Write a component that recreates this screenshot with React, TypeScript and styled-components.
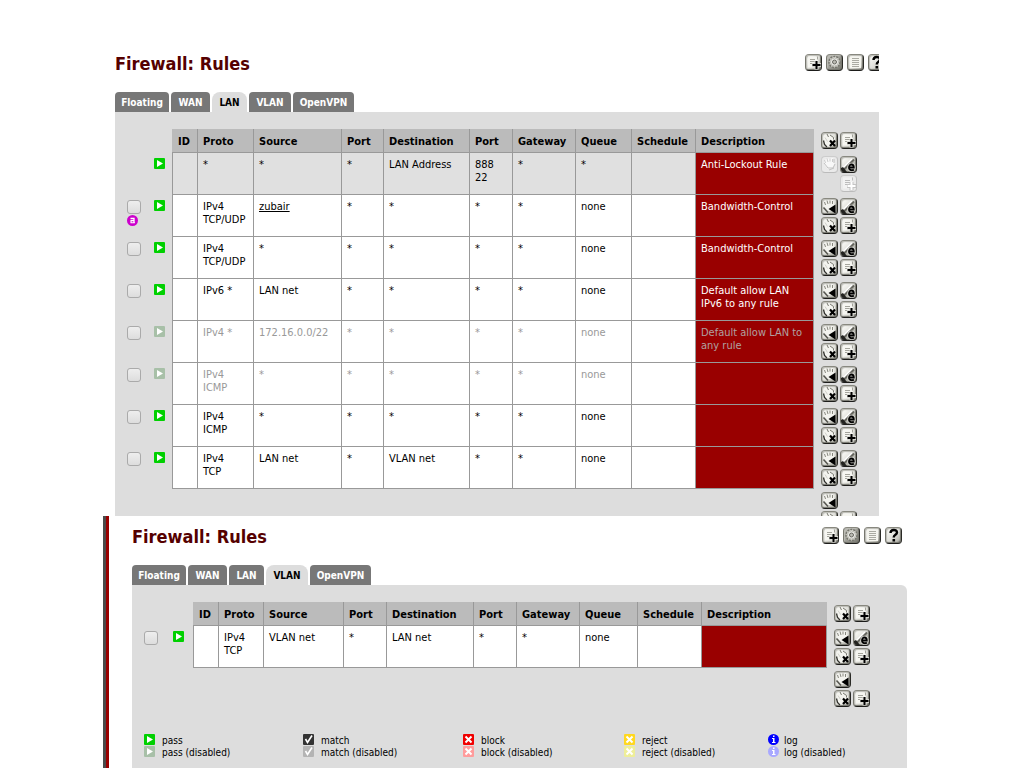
import React from "react";
import styled, { createGlobalStyle, css } from "styled-components";

const GlobalStyle = createGlobalStyle`
  * { box-sizing: border-box; }
  body {
    margin: 0;
    background: #fff;
    color: #000;
    font-family: "DejaVu Sans Condensed", "DejaVu Sans", sans-serif;
    font-size: 11px;
    line-height: 13px;
  }
`;

const Page = styled.div`
  display: flex;
  flex-direction: column;
  min-height: 100vh;
`;

const UpperSection = styled.section`
  margin: 0 145px 0 115px;
  padding-top: 53px;
  overflow: hidden;
`;

const LowerSection = styled.section`
  flex: 1;
  display: flex;
  flex-direction: column;
  margin: 0 117px 0 103px;
  padding: 10px 0 0 29px;
  background: linear-gradient(to right, #4a4a4a 3px, #990000 3px, #990000 6px, #fff 6px);
`;

const Head = styled.header`
  display: flex;
  justify-content: space-between;
  align-items: flex-start;
  height: 22px;
  margin-bottom: 17px;
`;

const Title = styled.h1`
  margin: 0;
  color: #550000;
  font-size: 18px;
  line-height: 22px;
  font-weight: 700;
  white-space: nowrap;
`;

const Tools = styled.div<{ $bleed?: boolean }>`
  display: flex;
  gap: 4px;
  padding-top: 1px;
  margin-right: ${(p) => (p.$bleed ? "-6px" : "5px")};
`;

const Tabs = styled.nav`
  display: flex;
  gap: 2px;
`;

const Tab = styled.a<{ $width: number; $active?: boolean }>`
  width: ${(p) => p.$width}px;
  height: 20px;
  line-height: 21px;
  text-align: center;
  text-decoration: none;
  font-size: 10px;
  font-weight: 700;
  color: ${(p) => (p.$active ? "#000" : "#fff")};
  background: ${(p) => (p.$active ? "#ddd" : "#777")};
  border-radius: ${(p) => (p.$active ? "8px 8px 0 0" : "4px 4px 0 0")};
`;

const Panel = styled.div<{ $rounded?: boolean }>`
  flex: 1;
  padding-top: 17px;
  background: #ddd;
  border-radius: ${(p) => (p.$rounded ? "0 6px 0 0" : "0")};
`;

const Table = styled.table`
  width: 100%;
  table-layout: fixed;
  border-collapse: separate;
  border-spacing: 0;
`;

const Col = styled.col<{ $width?: number }>`
  width: ${(p) => (p.$width ? `${p.$width}px` : "auto")};
`;

const HeadCell = styled.th<{ $first?: boolean; $last?: boolean }>`
  height: 24px;
  padding: 2px 0 0 ${(p) => (p.$first ? "6px" : "5px")};
  text-align: left;
  white-space: nowrap;
  background: #bbb;
  border-right: 1px solid ${(p) => (p.$last ? "#bbb" : "#999")};
  border-bottom: 1px solid #999;
`;

const Row = styled.tr<{ $disabled?: boolean }>`
  color: ${(p) => (p.$disabled ? "#999" : "#000")};
`;

const Cell = styled.td<{ $first?: boolean; $shaded?: boolean }>`
  height: 42px;
  padding: 5px 0 0 5px;
  vertical-align: top;
  white-space: pre-line;
  background: ${(p) => (p.$shaded ? "#e0e0e0" : "#fff")};
  border-right: 1px solid #999;
  border-bottom: 1px solid #999;
  ${(p) => p.$first && css`border-left: 1px solid #999;`}
`;

const DescCell = styled(Cell)<{ $disabled?: boolean }>`
  color: ${(p) => (p.$disabled ? "#b0a0a0" : "#fff")};
  background: #990000;
`;

const PlainCell = styled.td<{ $pad?: number }>`
  padding: 5px 0 0 ${(p) => p.$pad ?? 0}px;
  vertical-align: top;
`;

const ActionCell = styled.td`
  padding: 3px 0 0 7px;
  vertical-align: top;
`;

const ActionGrid = styled.div<{ $clipped?: boolean }>`
  display: grid;
  grid-template-columns: 17px 17px;
  grid-auto-rows: 17px;
  gap: 2px;
  ${(p) => p.$clipped && css`height: 24px; overflow: hidden;`}
`;

const Check = styled.input`
  display: block;
  appearance: none;
  width: 14px;
  height: 14px;
  margin: 0 0 1px;
  border: 1px solid #aaa;
  border-radius: 3px;
  background: linear-gradient(#eee, #ddd);
`;

const SourceLink = styled.a`
  color: #000;
  text-decoration: underline;
`;

const IconButton = styled.button<{ $faded?: boolean; $column?: number; $dark?: boolean }>`
  display: block;
  width: 17px;
  height: 17px;
  padding: 0;
  overflow: hidden;
  border: 1px solid;
  border-color: #88887f #2a2a26 #1c1c1a #77776f;
  border-radius: 4px;
  box-shadow: inset -1px -1px 1px #77776f, inset 1px 1px 1px #bbbbb4;
  background: ${(p) =>
    p.$dark
      ? "linear-gradient(135deg, #c4c4be, #77776f)"
      : "linear-gradient(135deg, #f4f4f0 20%, #deded8 55%, #a4a49c 100%)"};
  ${(p) => p.$faded && css`
    border-color: #ccc #c0c0c0 #bbb #ccc;
    box-shadow: none;
    background: #eaeaea;
  `}
  ${(p) => p.$column && css`grid-column: ${p.$column};`}
`;

const Glyph = styled.svg`
  display: block;
`;

const Legend = styled.div`
  display: grid;
  grid-template-columns: 159px 160px 161px 144px 1fr;
  padding: 27px 0 10px 12px;
  font-size: 10px;
`;

const LegendList = styled.ul`
  margin: 0;
  padding: 0;
  list-style: none;
`;

const LegendItem = styled.li<{ $gap: number }>`
  display: flex;
  gap: ${(p) => p.$gap}px;
  height: 12px;
  line-height: 14px;
  white-space: nowrap;
`;

type ActionKind = "add" | "delete" | "edit" | "move" | "gear" | "list" | "help";

function ActionGlyph({ kind, faded }: { kind: ActionKind; faded?: boolean }) {
  const ink = faded ? "#fff" : "#000";
  const line = faded ? "#bbb" : "#a4a49c";
  switch (kind) {
    case "add":
      return (
        <>
          <path d="M2 1.500h8l2 2v9H2z" fill={faded ? "#f2f2f2" : "#f6f6f1"} />
          <path d="M4 4.500h5M4 6.500h5M4 8.500h3" stroke={line} fill="none" />
          <path d="M11.500 1.500v3" stroke={line} />
          <path d="M6 10h9M10.500 6v8.500" stroke={faded ? "#c4c4c4" : "#d8d8d2"} strokeWidth="4" />
          <path d="M6.500 10h8M10.500 6v8" stroke={ink} strokeWidth="2" />
        </>
      );
    case "delete":
      return (
        <>
          <path d="M2 3l4-2 7 4v7l-8 2-3-5z" fill="#f4f4ef" />
          <path d="M1.500 7.500l1 4 2.500 2.500" stroke="#33332f" strokeWidth="1.300" fill="none" />
          <path d="M5 1l1.500 3M8 2l3.500 2.500v2" stroke="#77776f" fill="none" />
          <path d="M3 4.500l2.500 4" stroke="#d0d0ca" />
          <path d="M8 7.500l5 5.500M13 7.500l-5 5.500" stroke="#000" strokeWidth="2.200" />
        </>
      );
    case "edit":
      return (
        <>
          <path d="M13.500 1.500L14 14H2z" fill="#b4b4ac" />
          <path d="M2 11L11 2" stroke="#fff" strokeWidth="1.500" />
          <path d="M2 13.500L13 2.500" stroke="#66665f" strokeWidth="2" />
          <path d="M0 15v-4l2-1 4 5z" fill="#22221f" />
          <path d="M8 10.500h4.800c0-4-4.800-4-4.800 0 0 3.200 3.600 3.200 4.800 2" stroke="#d4d4ce" strokeWidth="3.500" fill="none" />
          <path d="M8 10.500h4.800c0-4-4.800-4-4.800 0 0 3.200 3.600 3.200 4.800 2" stroke="#000" strokeWidth="1.800" fill="none" />
        </>
      );
    case "move":
      return (
        <>
          <path
            d="M2 5l2-3 7-1 1.500 5-2 6H6L2.500 8z"
            fill={faded ? "#f8f8f8" : "#f3f3ee"}
          />
          <path
            d="M2.500 3l1 3M5 1.500l1 3.500M8 1.500v3M10.500 2v3"
            stroke={faded ? "#ccc" : "#88887f"}
            fill="none"
          />
          {faded ? (
            <path d="M2 6l4 5h5l2-4M12 2v4M7 13l5-2" stroke="#c0c0c0" fill="none" />
          ) : (
            <>
              <path d="M1.500 8.500l4.500 5" stroke="#55554f" strokeWidth="1.500" />
              <path d="M13.500 5.500v9L6.500 10z" fill="#000" />
            </>
          )}
        </>
      );
    case "gear":
      return (
        <>
          <circle cx="7.500" cy="7" r="5.500" fill="#d8d8d0" stroke="#77776f" strokeWidth="1.500" strokeDasharray="2 1" />
          <circle cx="7.500" cy="7" r="4" fill="#f0f0ec" stroke="#bbbbb4" />
          <circle cx="7.500" cy="7" r="2" fill="#bbbbb4" stroke="#66665f" />
        </>
      );
    case "list":
      return (
        <>
          <path d="M2 1.500h11v11.500H2z" fill="#f5f5ef" />
          <path d="M4 3.500h7M4 5.500h7M4 7.500h7M4 9.500h7M4 11.500h7" stroke="#aaaaa2" />
        </>
      );
    default:
      return (
        <>
          <path d="M4.500 5c0-4 6.500-4 6.500-.500 0 2.500-3.300 2-3.300 5" stroke="#000" strokeWidth="2.400" fill="none" />
          <path d="M6.500 11h2.600v2.500H6.500z" fill="#000" />
        </>
      );
  }
}

const actionLabels: Record<ActionKind, string> = {
  add: "Add rule",
  delete: "Delete rule",
  edit: "Edit rule",
  move: "Move rule",
  gear: "Settings",
  list: "Logs",
  help: "Help",
};

function Action({ kind, faded, column }: { kind: ActionKind; faded?: boolean; column?: number }) {
  return (
    <IconButton type="button" aria-label={actionLabels[kind]} $faded={faded} $column={column} $dark={kind === "gear"}>
      <Glyph width="15" height="15" viewBox="0 0 15 15" aria-hidden="true">
        <ActionGlyph kind={kind} faded={faded} />
      </Glyph>
    </IconButton>
  );
}

type StatusKind = "pass" | "match" | "block" | "reject" | "log" | "advanced";

const statusColors: Record<StatusKind, [string, string]> = {
  pass: ["#00d000", "#a8c0a8"],
  match: ["#333", "#b4b4b4"],
  block: ["#f00000", "#ff9c9c"],
  reject: ["#ffd820", "#eeee99"],
  log: ["#0000ff", "#a8a8ff"],
  advanced: ["#cc00cc", "#cc99cc"],
};

function Status({ kind, disabled }: { kind: StatusKind; disabled?: boolean }) {
  const fill = statusColors[kind][disabled ? 1 : 0];
  const round = kind === "log" || kind === "advanced";
  return (
    <Glyph width="11" height="11" viewBox="0 0 11 11" aria-hidden="true">
      <rect width="11" height="11" rx={round ? 5.5 : 1} fill={fill} />
      {kind === "pass" && <path d="M3 2v7l6-3.500z" fill="#fff" />}
      {kind === "match" && <path d="M2.500 5l2 3.500 4.500-7" stroke="#fff" strokeWidth="1.600" fill="none" />}
      {(kind === "block" || kind === "reject") && (
        <path d="M2.500 2.500l6 6M8.500 2.500l-6 6" stroke="#fff" strokeWidth="2" />
      )}
      {kind === "log" && <path d="M5 1.500h1.500v1.500H5zM4 4h2.500v4H7.500v1H4V8h1V5H4z" fill="#fff" />}
      {kind === "advanced" && (
        <>
          <path d="M3.500 3.500h3.500v4.500" stroke="#fff" strokeWidth="1.300" fill="none" />
          <path d="M7 5.600H4v2.200h3.800" stroke="#fff" strokeWidth="1.100" fill="none" />
        </>
      )}
    </Glyph>
  );
}

interface Rule {
  cells: string[];
  description: string;
  disabled?: boolean;
  locked?: boolean;
  advanced?: boolean;
  linked?: boolean;
}

const headings = ["ID", "Proto", "Source", "Port", "Destination", "Port", "Gateway", "Queue", "Schedule", "Description"];
const tabNames: [string, number][] = [["Floating", 54], ["WAN", 39], ["LAN", 35], ["VLAN", 42], ["OpenVPN", 61]];

const lanRules: Rule[] = [
  { cells: ["", "*", "*", "*", "LAN Address", "888\n22", "*", "*", ""], description: "Anti-Lockout Rule", locked: true },
  { cells: ["", "IPv4 TCP/UDP", "zubair", "*", "*", "*", "*", "none", ""], description: "Bandwidth-Control", advanced: true, linked: true },
  { cells: ["", "IPv4 TCP/UDP", "*", "*", "*", "*", "*", "none", ""], description: "Bandwidth-Control" },
  { cells: ["", "IPv6 *", "LAN net", "*", "*", "*", "*", "none", ""], description: "Default allow LAN IPv6 to any rule" },
  { cells: ["", "IPv4 *", "172.16.0.0/22", "*", "*", "*", "*", "none", ""], description: "Default allow LAN to any rule", disabled: true },
  { cells: ["", "IPv4\nICMP", "*", "*", "*", "*", "*", "none", ""], description: "", disabled: true },
  { cells: ["", "IPv4\nICMP", "*", "*", "*", "*", "*", "none", ""], description: "" },
  { cells: ["", "IPv4\nTCP", "LAN net", "*", "VLAN net", "*", "*", "none", ""], description: "" },
];

const vlanRules: Rule[] = [
  { cells: ["", "IPv4\nTCP", "VLAN net", "*", "LAN net", "*", "*", "none", ""], description: "" },
];

const lanColumns = [39, 18, 26, 56, 88, 42, 86, 43, 63, 56, 64, 0, 65];
const vlanColumns = [41, 20, 26, 45, 80, 43, 87, 43, 63, 58, 64, 0, 80];

function PageHead({ bleed }: { bleed?: boolean }) {
  return (
    <Head>
      <Title>Firewall: Rules</Title>
      <Tools $bleed={bleed}>
        <Action kind="add" />
        <Action kind="gear" />
        <Action kind="list" />
        <Action kind="help" />
      </Tools>
    </Head>
  );
}

function TabBar({ active }: { active: string }) {
  return (
    <Tabs>
      {tabNames.map(([name, width]) => (
        <Tab key={name} href="#" $width={width} $active={name === active}>
          {name}
        </Tab>
      ))}
    </Tabs>
  );
}

function RulesTable({ rules, columns, clipped }: { rules: Rule[]; columns: number[]; clipped?: boolean }) {
  return (
    <Table>
      <colgroup>
        {columns.map((width, i) => (
          <Col key={i} $width={width} />
        ))}
      </colgroup>
      <thead>
        <tr>
          <td colSpan={2} />
          {headings.map((text, i) => (
            <HeadCell key={i} scope="col" $first={i === 0} $last={i === headings.length - 1}>
              {text}
            </HeadCell>
          ))}
          <ActionCell>
            <ActionGrid>
              <Action kind="delete" />
              <Action kind="add" />
            </ActionGrid>
          </ActionCell>
        </tr>
      </thead>
      <tbody>
        {rules.map((rule, r) => (
          <Row key={r} $disabled={rule.disabled}>
            <PlainCell $pad={12}>
              {!rule.locked && <Check type="checkbox" aria-label={`Select rule ${r + 1}`} />}
              {rule.advanced && <Status kind="advanced" />}
            </PlainCell>
            <PlainCell>
              <Status kind="pass" disabled={rule.disabled} />
            </PlainCell>
            {rule.cells.map((text, i) => (
              <Cell key={i} $first={i === 0} $shaded={rule.locked}>
                {rule.linked && i === 2 ? <SourceLink href="#">{text}</SourceLink> : text}
              </Cell>
            ))}
            <DescCell $disabled={rule.disabled}>{rule.description}</DescCell>
            <ActionCell>
              <ActionGrid>
                <Action kind="move" faded={rule.locked} />
                <Action kind="edit" />
                {!rule.locked && <Action kind="delete" />}
                <Action kind="add" faded={rule.locked} column={2} />
              </ActionGrid>
            </ActionCell>
          </Row>
        ))}
        <tr>
          <td colSpan={12} />
          <ActionCell>
            <ActionGrid $clipped={clipped}>
              <Action kind="move" />
              <span />
              <Action kind="delete" />
              <Action kind="add" />
            </ActionGrid>
          </ActionCell>
        </tr>
      </tbody>
    </Table>
  );
}

const legend: { kind: StatusKind; gap: number }[] = [
  { kind: "pass", gap: 7 },
  { kind: "match", gap: 7 },
  { kind: "block", gap: 7 },
  { kind: "reject", gap: 7 },
  { kind: "log", gap: 5 },
];

export default function App() {
  return (
    <Page>
      <GlobalStyle />
      <UpperSection>
        <PageHead bleed />
        <TabBar active="LAN" />
        <Panel>
          <RulesTable rules={lanRules} columns={lanColumns} clipped />
        </Panel>
      </UpperSection>
      <LowerSection>
        <PageHead />
        <TabBar active="VLAN" />
        <Panel $rounded>
          <RulesTable rules={vlanRules} columns={vlanColumns} />
          <Legend>
            {legend.map(({ kind, gap }) => (
              <LegendList key={kind}>
                <LegendItem $gap={gap}>
                  <Status kind={kind} />
                  {kind}
                </LegendItem>
                <LegendItem $gap={gap}>
                  <Status kind={kind} disabled />
                  {kind} (disabled)
                </LegendItem>
              </LegendList>
            ))}
          </Legend>
        </Panel>
      </LowerSection>
    </Page>
  );
}
